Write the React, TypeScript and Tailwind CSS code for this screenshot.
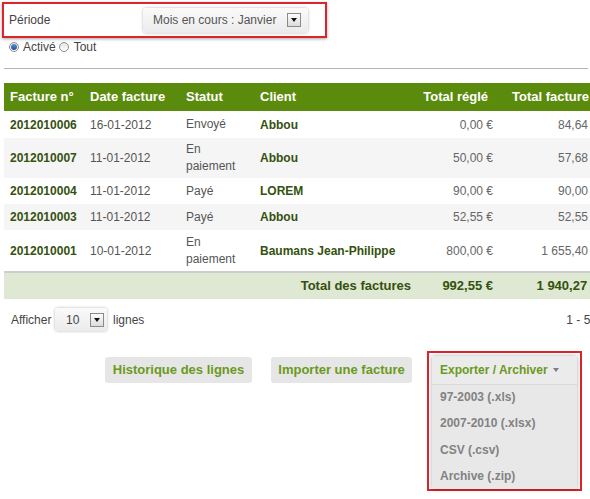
import React from "react";

const F = { fontFamily: '"Liberation Sans", Arial, sans-serif' };

function DropBtn() {
  return (
    <span className="flex h-[14px] w-[14px] shrink-0 items-center justify-center border border-[#8a8a8a] bg-gradient-to-b from-[#fdfdfd] to-[#dcdcdc]">
      <span className="h-0 w-0 border-x-[3.5px] border-t-[4px] border-x-transparent border-t-[#111]" />
    </span>
  );
}

function Radio({ checked }: { checked?: boolean }) {
  return (
    <span className="flex h-[10px] w-[10px] items-center justify-center rounded-full border border-[#8c8c8c] bg-gradient-to-b from-[#e4e4e4] to-[#ffffff]">
      {checked && <span className="h-[6px] w-[6px] rounded-full bg-gradient-to-b from-[#5c8fd6] to-[#1d4f9c]" />}
    </span>
  );
}

type Row = {
  num: string;
  date: string;
  statut: string[];
  client: string;
  regle: string;
  total: string;
  h: string;
  bg: string;
};

const rows: Row[] = [
  { num: "2012010006", date: "16-01-2012", statut: ["Envoyé"], client: "Abbou", regle: "0,00 €", total: "84,64 €", h: "h-[27px]", bg: "bg-white" },
  { num: "2012010007", date: "11-01-2012", statut: ["En", "paiement"], client: "Abbou", regle: "50,00 €", total: "57,68 €", h: "h-[40px]", bg: "bg-[#f5f5f5]" },
  { num: "2012010004", date: "11-01-2012", statut: ["Payé"], client: "LOREM", regle: "90,00 €", total: "90,00 €", h: "h-[26px]", bg: "bg-white" },
  { num: "2012010003", date: "11-01-2012", statut: ["Payé"], client: "Abbou", regle: "52,55 €", total: "52,55 €", h: "h-[26px]", bg: "bg-[#f5f5f5]" },
  { num: "2012010001", date: "10-01-2012", statut: ["En", "paiement"], client: "Baumans Jean-Philippe", regle: "800,00 €", total: "1 655,40 €", h: "h-[42px]", bg: "bg-white" },
];

export default function App() {
  return (
    <div style={F} className="relative h-[499px] w-[590px] overflow-hidden bg-white text-[12px] text-[#444]">
      {/* Période */}
      <div className="ml-[2px] mt-[2px] flex h-[36px] w-[325px] items-center border-2 border-[#d9252b] shadow-[0_1px_3px_rgba(0,0,0,0.35)]">
        <span className="ml-[5px] w-[134px] shrink-0 text-[#444]">Période</span>
        <div className="flex h-[25px] w-[165px] shrink-0 items-center justify-between rounded-[3px] bg-gradient-to-b from-[#fafafa] to-[#ebebeb] pl-[10px] pr-[7px] shadow-[0_0_3px_rgba(0,0,0,0.3)]">
          <span className="text-[#555]">Mois en cours : Janvier</span>
          <DropBtn />
        </div>
      </div>

      {/* radios */}
      <div className="ml-[9px] mt-[2px] flex h-[14px] items-center">
        <Radio checked />
        <span className="ml-[4px] text-[#444]">Activé</span>
        <span className="ml-[3px]"><Radio /></span>
        <span className="ml-[5px] text-[#444]">Tout</span>
      </div>

      <div className="ml-[4px] mt-[14px] h-px w-[584px] bg-[#b4b4b4]" />

      {/* table */}
      <table className="ml-[4px] mt-[14px] w-[605px] table-fixed border-collapse">
        <colgroup>
          <col className="w-[80px]" />
          <col className="w-[96px]" />
          <col className="w-[74px]" />
          <col className="w-[161px]" />
          <col className="w-[79px]" />
          <col className="w-[115px]" />
        </colgroup>
        <thead>
          <tr className="h-[28px] bg-[#5b8b0c] text-[13px] font-bold text-white">
            <th className="pl-[6px] text-left whitespace-nowrap">Facture n°</th>
            <th className="pl-[6px] text-left whitespace-nowrap">Date facture</th>
            <th className="pl-[6px] text-left">Statut</th>
            <th className="pl-[6px] text-left">Client</th>
            <th className="pr-[6px] text-right whitespace-nowrap">Total réglé</th>
            <th className="pl-[18px] text-left whitespace-nowrap">Total facture</th>
          </tr>
        </thead>
        <tbody>
          {rows.map((r) => (
            <tr key={r.num} className={`${r.h} ${r.bg}`}>
              <td className="pl-[6px] font-bold text-[#34510f]">{r.num}</td>
              <td className="pl-[6px] text-[#555]">{r.date}</td>
              <td className="pl-[6px] leading-[17px] text-[#555]">
                {r.statut.map((s) => (
                  <div key={s}>{s}</div>
                ))}
              </td>
              <td className="whitespace-nowrap pl-[6px] font-bold text-[#34510f]">{r.client}</td>
              <td className="pr-[1px] text-right whitespace-nowrap text-[#666]">{r.regle}</td>
              <td className="pr-[11px] text-right whitespace-nowrap text-[#666]">{r.total}</td>
            </tr>
          ))}
          <tr className="h-[27px] border-t-2 border-[#cdcdcd] bg-[#dfe8d2] text-[13px] font-bold text-[#34510f]">
            <td colSpan={4} className="pr-[4px] text-right">Total des factures</td>
            <td className="pr-[1px] text-right whitespace-nowrap">992,55 €</td>
            <td className="pr-[11px] text-right whitespace-nowrap">1 940,27 €</td>
          </tr>
        </tbody>
      </table>

      {/* pagination row */}
      <div className="mt-[9px] flex h-[23px] items-center">
        <span className="ml-[11px] w-[44px] shrink-0 text-[#444]">Afficher</span>
        <div className="flex h-[23px] w-[52px] shrink-0 items-center justify-between rounded-[3px] bg-gradient-to-b from-[#fafafa] to-[#ebebeb] pl-[11px] pr-[3px] shadow-[0_0_3px_rgba(0,0,0,0.3)]">
          <span className="text-[#444]">10</span>
          <DropBtn />
        </div>
        <span className="ml-[6px] shrink-0 text-[#444]">lignes</span>
        <span className="ml-[422px] shrink-0 whitespace-nowrap text-[#444]">1 - 5 sur 5</span>
      </div>

      {/* buttons */}
      <div className="mt-[20px] flex items-start">
        <button className="ml-[105px] mt-[6px] h-[26px] w-[147px] shrink-0 rounded-[3px] bg-[#e6e6e6] text-[13px] font-bold text-[#6a9a1c]">
          Historique des lignes
        </button>
        <button className="ml-[19px] mt-[6px] h-[26px] w-[141px] shrink-0 rounded-[3px] bg-[#e6e6e6] text-[13px] font-bold text-[#6a9a1c]">
          Importer une facture
        </button>
        <div className="ml-[15px] h-[140px] w-[155px] shrink-0 border-2 border-[#d9252b] p-[3px] pb-[1px]">
          <div className="flex h-[133px] flex-col bg-[#e8e8e8] shadow-[0_0_4px_rgba(0,0,0,0.35)]">
            <div className="flex h-[28px] items-center bg-[#ebebeb] pl-[8px] text-[12px] font-bold text-[#6a9a1c] shadow-[0_1px_1px_rgba(0,0,0,0.06)]">
              Exporter / Archiver
              <span className="ml-[5px] h-0 w-0 border-x-[3.5px] border-t-[4px] border-x-transparent border-t-[#7d7d7d]" />
            </div>
            {["97-2003 (.xls)", "2007-2010 (.xlsx)", "CSV (.csv)", "Archive (.zip)"].map((t) => (
              <div key={t} className="flex h-[26.5px] items-center pl-[8px] font-bold text-[#828282]">
                {t}
              </div>
            ))}
          </div>
        </div>
      </div>
    </div>
  );
}
